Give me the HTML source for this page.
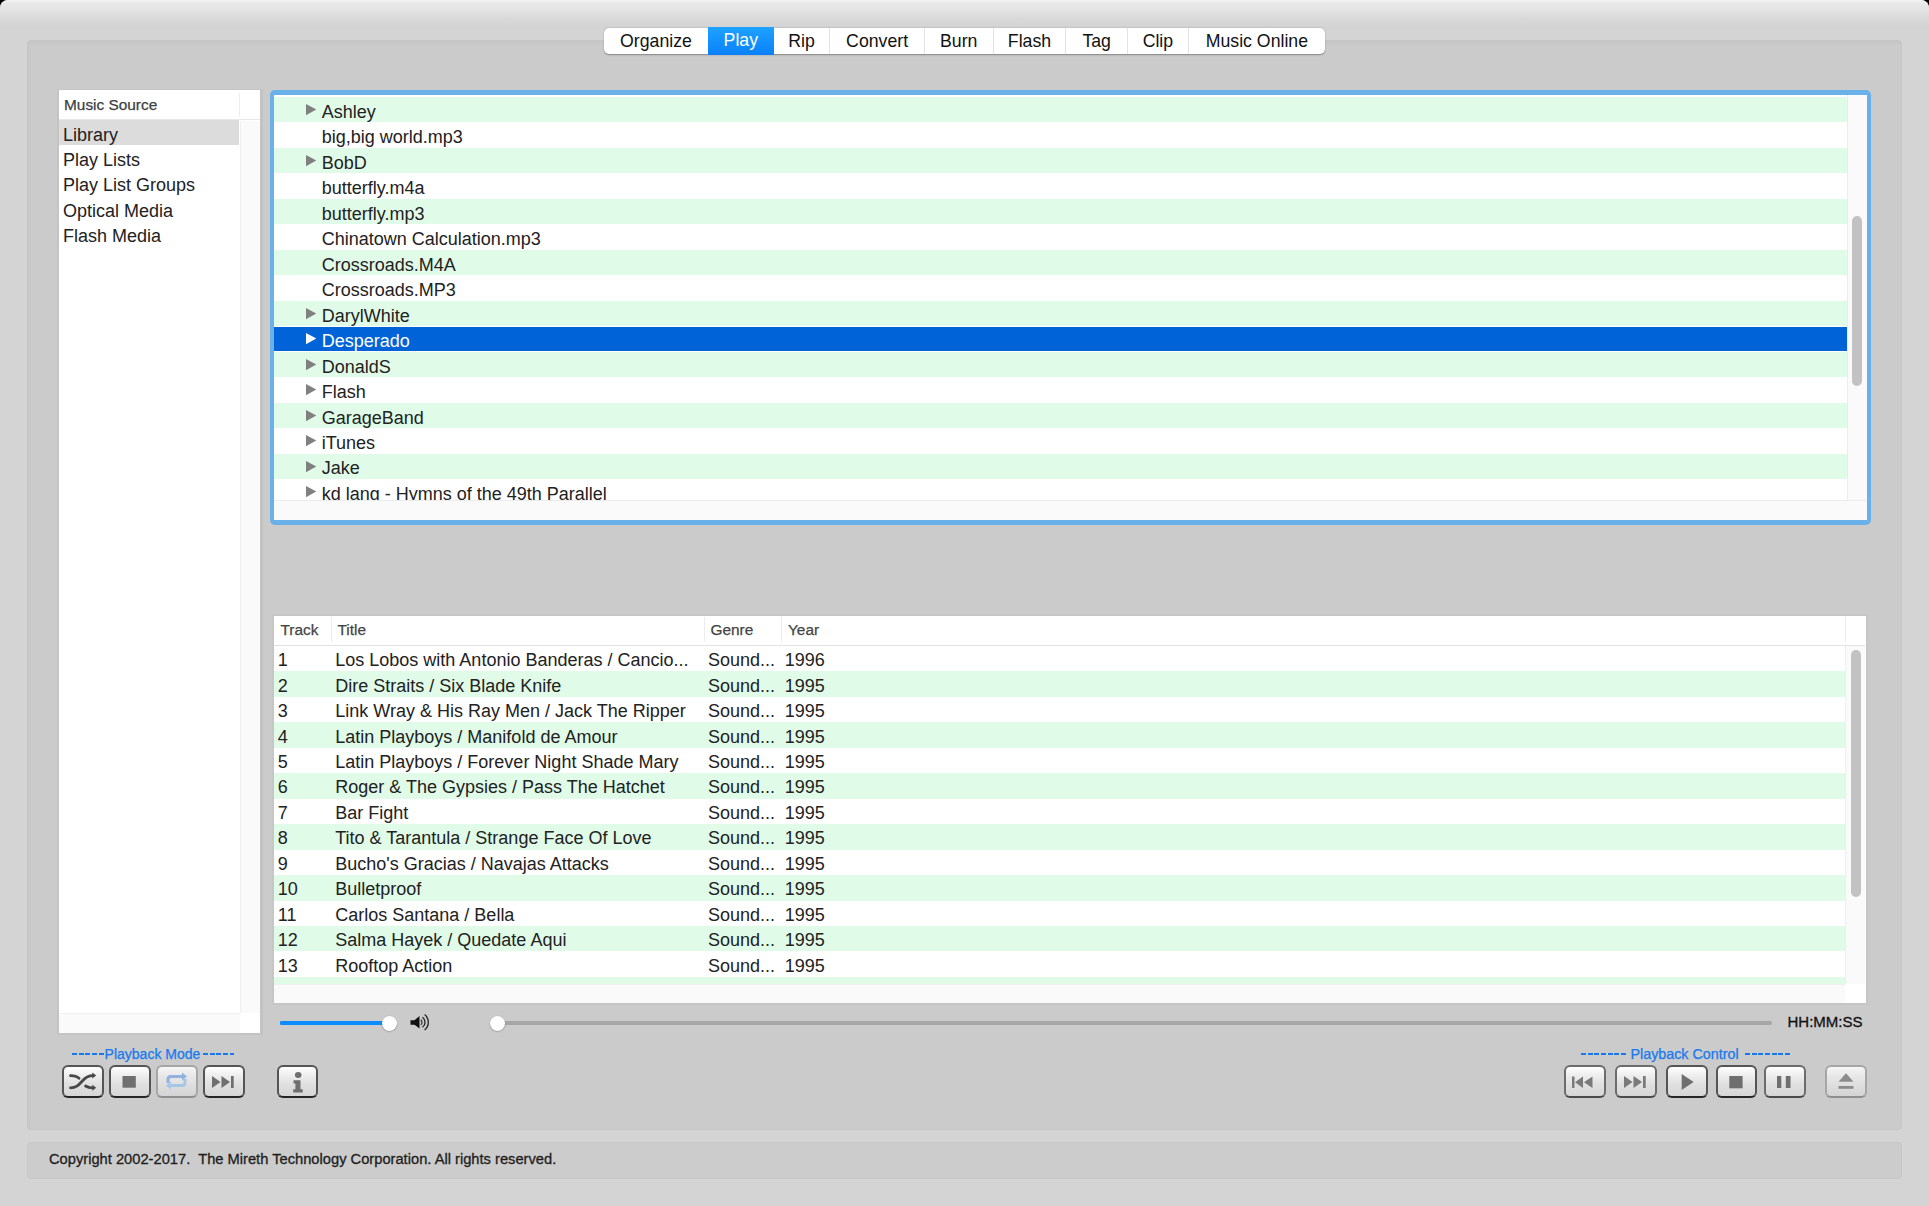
<!DOCTYPE html><html><head><meta charset="utf-8"><title>Play</title><style>
*{margin:0;padding:0;box-sizing:border-box}
html,body{width:1929px;height:1206px;overflow:hidden;background:#000}
body{font-family:"Liberation Sans",sans-serif;color:#222;position:relative}
.a{position:absolute}
#win{left:0;top:0;width:1929px;height:1206px;background:#d4d4d4;border-radius:8px 8px 0 0;overflow:hidden}
#titlegrad{left:0;top:0;width:1929px;height:28px;background:linear-gradient(#f3f3f3 0,#eaeaea 3px,#e2e2e2 11px,#d9d9d9 19px,#d4d4d4 26px)}
#inner{left:26.5px;top:40px;width:1875.5px;height:1090px;background:#cbcbcb;border-radius:4px;border:1px solid #c6c6c6;box-shadow:inset 1px 2px 3px rgba(0,0,0,.03)}
#footer{left:26.5px;top:1141.5px;width:1875.5px;height:37px;background:#cccccc;border-radius:4px;border:1px solid #c7c7c7}
#copy{left:49px;top:1150px;font-size:14.7px;line-height:18px;color:#1e1e1e;white-space:nowrap;-webkit-text-stroke:0.3px #1e1e1e}
#tabs{left:604px;top:27.8px;width:721px;height:26.2px;background:#fff;border-radius:5px;box-shadow:0 0.5px 1.5px rgba(0,0,0,.35)}
.tab{position:absolute;top:0;height:26px;line-height:26px;text-align:center;font-size:17.7px;color:#111;border-left:1px solid #e3e3e3}
.tab.first{border-left:none}
.tab.sel{top:-0.9px;height:27.8px;line-height:27.8px;background:linear-gradient(#1ea2ff,#0a80fa);color:#fff;border-left:none}
#side{left:59px;top:90px;width:201px;height:943px;background:#fff}
.sh{left:0;top:0;width:201px;height:30px;border-bottom:1px solid #e8e8e8}
.row{position:absolute;left:0;white-space:nowrap;font-size:18px;color:#222}
.txt{position:absolute;white-space:nowrap;font-size:18px;color:#222}
.hd{position:absolute;white-space:nowrap;font-size:15.4px;color:#444;-webkit-text-stroke:0.25px #444}
.tri{position:absolute;width:0;height:0;border-top:5.6px solid transparent;border-bottom:5.6px solid transparent;border-left:10.3px solid #808080}
.thumb{position:absolute;background:#c2c2c2;border-radius:5px}
.btn{position:absolute;top:1065px;width:41.5px;height:33.3px;border-radius:6px;border:2px solid #555;border-bottom:2.4px solid #262626;background:linear-gradient(#ffffff 0%,#f0f0f0 25%,#e0e0e0 60%,#d6d6d6 100%)}
.btn.dis{border-color:#a6a6a6;border-bottom-color:#8f8f8f;background:linear-gradient(#f6f6f6 0%,#e8e8e8 30%,#dcdcdc 70%,#d4d4d4 100%)}
.btn.mid{border-color:#6c6c6c;border-bottom-color:#4a4a4a}
.btn svg{position:absolute;left:0;top:0}
.lbl{position:absolute;font-size:14px;color:#1779ee;white-space:nowrap;-webkit-text-stroke:0.25px #1779ee}
</style></head><body>
<div id="win" class="a">
<div id="titlegrad" class="a"></div>
<div id="inner" class="a"></div>
<div id="footer" class="a"></div>
<div id="copy" class="a">Copyright 2002-2017.&nbsp; The Mireth Technology Corporation. All rights reserved.</div>
<div id="tabs" class="a">
<div class="tab first" style="left:0.0px;width:104.0px;">Organize</div>
<div class="tab sel" style="left:104.0px;width:65.6px;">Play</div>
<div class="tab" style="left:169.6px;width:55.8px;border-left:none;">Rip</div>
<div class="tab" style="left:225.4px;width:94.4px;">Convert</div>
<div class="tab" style="left:319.8px;width:68.9px;">Burn</div>
<div class="tab" style="left:388.7px;width:72.6px;">Flash</div>
<div class="tab" style="left:461.3px;width:61.7px;">Tag</div>
<div class="tab" style="left:523.0px;width:60.8px;">Clip</div>
<div class="tab" style="left:583.8px;width:137.2px;">Music Online</div>
</div>
<div class="a" style="left:57px;top:88.5px;width:203px;height:946px;background:#c4c4c4"></div>
<div class="a" style="left:259.7px;top:88.5px;width:3.5px;height:946px;background:#c3c3c3"></div>
<div id="side" class="a">
<div class="a sh"></div>
<div class="a" style="left:180px;top:3px;width:1px;height:24px;background:#ececec"></div>
<div class="hd" style="left:5px;top:6px;color:#3c3c3c">Music Source</div>
<div class="a" style="left:181px;top:31px;width:20px;height:892px;background:#fafafa;border-left:1px solid #f0f0f0"></div>
<div class="a" style="left:0;top:923px;width:181px;height:20px;background:#fafafa;border-top:1px solid #f0f0f0"></div>
<div class="a" style="left:0;top:30px;width:180px;height:24.5px;background:#dcdcdc"></div>
<div class="txt" style="left:4px;top:34.50px;line-height:20px">Library</div>
<div class="txt" style="left:4px;top:59.97px;line-height:20px">Play Lists</div>
<div class="txt" style="left:4px;top:85.44px;line-height:20px">Play List Groups</div>
<div class="txt" style="left:4px;top:110.91px;line-height:20px">Optical Media</div>
<div class="txt" style="left:4px;top:136.38px;line-height:20px">Flash Media</div>
</div>
<div class="a" style="left:269.7px;top:89.8px;width:1601.7px;height:435.2px;border-radius:5px;background:#6ab0e9"></div>
<div class="a" style="left:273.7px;top:94.6px;width:1593.2px;height:425.2px;background:#fff;overflow:hidden">
<div class="a" style="left:0;top:2.60px;width:1573.3px;height:25.1px;background:#e1fbe9"></div>
<svg class="a" style="left:32.8px;top:9.40px" width="11" height="12" viewBox="0 0 11 12"><path d="M0 0L10.3 5.6L0 11.2z" fill="#808080"/></svg>
<div class="txt" style="left:48px;top:7.30px;line-height:20px;color:#222">Ashley</div>
<div class="txt" style="left:48px;top:32.77px;line-height:20px;color:#222">big,big world.mp3</div>
<div class="a" style="left:0;top:53.54px;width:1573.3px;height:25.1px;background:#e1fbe9"></div>
<svg class="a" style="left:32.8px;top:60.34px" width="11" height="12" viewBox="0 0 11 12"><path d="M0 0L10.3 5.6L0 11.2z" fill="#808080"/></svg>
<div class="txt" style="left:48px;top:58.24px;line-height:20px;color:#222">BobD</div>
<div class="txt" style="left:48px;top:83.71px;line-height:20px;color:#222">butterfly.m4a</div>
<div class="a" style="left:0;top:104.48px;width:1573.3px;height:25.1px;background:#e1fbe9"></div>
<div class="txt" style="left:48px;top:109.18px;line-height:20px;color:#222">butterfly.mp3</div>
<div class="txt" style="left:48px;top:134.65px;line-height:20px;color:#222">Chinatown Calculation.mp3</div>
<div class="a" style="left:0;top:155.42px;width:1573.3px;height:25.1px;background:#e1fbe9"></div>
<div class="txt" style="left:48px;top:160.12px;line-height:20px;color:#222">Crossroads.M4A</div>
<div class="txt" style="left:48px;top:185.59px;line-height:20px;color:#222">Crossroads.MP3</div>
<div class="a" style="left:0;top:206.36px;width:1573.3px;height:25.1px;background:#e1fbe9"></div>
<svg class="a" style="left:32.8px;top:213.16px" width="11" height="12" viewBox="0 0 11 12"><path d="M0 0L10.3 5.6L0 11.2z" fill="#808080"/></svg>
<div class="txt" style="left:48px;top:211.06px;line-height:20px;color:#222">DarylWhite</div>
<div class="a" style="left:0;top:232.23px;width:1573.3px;height:24.4px;background:#0064d8"></div>
<svg class="a" style="left:32.8px;top:238.63px" width="11" height="12" viewBox="0 0 11 12"><path d="M0 0L10.3 5.6L0 11.2z" fill="#fff"/></svg>
<div class="txt" style="left:48px;top:236.53px;line-height:20px;color:#fff">Desperado</div>
<div class="a" style="left:0;top:257.30px;width:1573.3px;height:25.1px;background:#e1fbe9"></div>
<svg class="a" style="left:32.8px;top:264.10px" width="11" height="12" viewBox="0 0 11 12"><path d="M0 0L10.3 5.6L0 11.2z" fill="#808080"/></svg>
<div class="txt" style="left:48px;top:262.00px;line-height:20px;color:#222">DonaldS</div>
<svg class="a" style="left:32.8px;top:289.57px" width="11" height="12" viewBox="0 0 11 12"><path d="M0 0L10.3 5.6L0 11.2z" fill="#808080"/></svg>
<div class="txt" style="left:48px;top:287.47px;line-height:20px;color:#222">Flash</div>
<div class="a" style="left:0;top:308.24px;width:1573.3px;height:25.1px;background:#e1fbe9"></div>
<svg class="a" style="left:32.8px;top:315.04px" width="11" height="12" viewBox="0 0 11 12"><path d="M0 0L10.3 5.6L0 11.2z" fill="#808080"/></svg>
<div class="txt" style="left:48px;top:312.94px;line-height:20px;color:#222">GarageBand</div>
<svg class="a" style="left:32.8px;top:340.51px" width="11" height="12" viewBox="0 0 11 12"><path d="M0 0L10.3 5.6L0 11.2z" fill="#808080"/></svg>
<div class="txt" style="left:48px;top:338.41px;line-height:20px;color:#222">iTunes</div>
<div class="a" style="left:0;top:359.18px;width:1573.3px;height:25.1px;background:#e1fbe9"></div>
<svg class="a" style="left:32.8px;top:365.98px" width="11" height="12" viewBox="0 0 11 12"><path d="M0 0L10.3 5.6L0 11.2z" fill="#808080"/></svg>
<div class="txt" style="left:48px;top:363.88px;line-height:20px;color:#222">Jake</div>
<svg class="a" style="left:32.8px;top:391.45px" width="11" height="12" viewBox="0 0 11 12"><path d="M0 0L10.3 5.6L0 11.2z" fill="#808080"/></svg>
<div class="txt" style="left:48px;top:389.35px;line-height:20px;color:#222">kd lang - Hymns of the 49th Parallel</div>
<div class="a" style="left:1573.3px;top:0;width:20px;height:405.3px;background:#fafafa;border-left:1px solid #ececec"></div>
<div class="thumb" style="left:1578px;top:121.5px;width:10.3px;height:170px"></div>
<div class="a" style="left:0;top:405.3px;width:1593.2px;height:20px;background:#fafafa;border-top:1px solid #ececec"></div>
</div>
<div class="a" style="left:272px;top:613.5px;width:1596.2px;height:391.5px;background:#c6c6c6;border-radius:1.5px"></div>
<div class="a" style="left:274.4px;top:616px;width:1591.6px;height:387px;background:#fff;overflow:hidden">
<div class="a" style="left:0;top:29px;width:1591px;height:1px;background:#e2e2e2"></div>
<div class="a" style="left:56.6px;top:1px;width:1px;height:25px;background:#ececec"></div>
<div class="a" style="left:429.6px;top:1px;width:1px;height:25px;background:#ececec"></div>
<div class="a" style="left:506.6px;top:1px;width:1px;height:25px;background:#ececec"></div>
<div class="a" style="left:1570.6px;top:1px;width:1px;height:25px;background:#ececec"></div>
<div class="hd" style="left:6.1px;top:4.7px">Track</div>
<div class="hd" style="left:63.1px;top:4.7px">Title</div>
<div class="hd" style="left:436.1px;top:4.7px">Genre</div>
<div class="hd" style="left:513.6px;top:4.7px">Year</div>
<div class="txt" style="left:3.4px;top:34.10px;line-height:20px">1</div>
<div class="txt" style="left:60.9px;top:34.10px;line-height:20px">Los Lobos with Antonio Banderas / Cancio...</div>
<div class="txt" style="left:433.6px;top:34.10px;line-height:20px">Sound...</div>
<div class="txt" style="left:510.4px;top:34.10px;line-height:20px">1996</div>
<div class="a" style="left:0;top:55.37px;width:1571px;height:25.4px;background:#e1fbe9"></div>
<div class="txt" style="left:3.4px;top:59.57px;line-height:20px">2</div>
<div class="txt" style="left:60.9px;top:59.57px;line-height:20px">Dire Straits / Six Blade Knife</div>
<div class="txt" style="left:433.6px;top:59.57px;line-height:20px">Sound...</div>
<div class="txt" style="left:510.4px;top:59.57px;line-height:20px">1995</div>
<div class="txt" style="left:3.4px;top:85.04px;line-height:20px">3</div>
<div class="txt" style="left:60.9px;top:85.04px;line-height:20px">Link Wray &amp; His Ray Men / Jack The Ripper</div>
<div class="txt" style="left:433.6px;top:85.04px;line-height:20px">Sound...</div>
<div class="txt" style="left:510.4px;top:85.04px;line-height:20px">1995</div>
<div class="a" style="left:0;top:106.31px;width:1571px;height:25.4px;background:#e1fbe9"></div>
<div class="txt" style="left:3.4px;top:110.51px;line-height:20px">4</div>
<div class="txt" style="left:60.9px;top:110.51px;line-height:20px">Latin Playboys / Manifold de Amour</div>
<div class="txt" style="left:433.6px;top:110.51px;line-height:20px">Sound...</div>
<div class="txt" style="left:510.4px;top:110.51px;line-height:20px">1995</div>
<div class="txt" style="left:3.4px;top:135.98px;line-height:20px">5</div>
<div class="txt" style="left:60.9px;top:135.98px;line-height:20px">Latin Playboys / Forever Night Shade Mary</div>
<div class="txt" style="left:433.6px;top:135.98px;line-height:20px">Sound...</div>
<div class="txt" style="left:510.4px;top:135.98px;line-height:20px">1995</div>
<div class="a" style="left:0;top:157.25px;width:1571px;height:25.4px;background:#e1fbe9"></div>
<div class="txt" style="left:3.4px;top:161.45px;line-height:20px">6</div>
<div class="txt" style="left:60.9px;top:161.45px;line-height:20px">Roger &amp; The Gypsies / Pass The Hatchet</div>
<div class="txt" style="left:433.6px;top:161.45px;line-height:20px">Sound...</div>
<div class="txt" style="left:510.4px;top:161.45px;line-height:20px">1995</div>
<div class="txt" style="left:3.4px;top:186.92px;line-height:20px">7</div>
<div class="txt" style="left:60.9px;top:186.92px;line-height:20px">Bar Fight</div>
<div class="txt" style="left:433.6px;top:186.92px;line-height:20px">Sound...</div>
<div class="txt" style="left:510.4px;top:186.92px;line-height:20px">1995</div>
<div class="a" style="left:0;top:208.19px;width:1571px;height:25.4px;background:#e1fbe9"></div>
<div class="txt" style="left:3.4px;top:212.39px;line-height:20px">8</div>
<div class="txt" style="left:60.9px;top:212.39px;line-height:20px">Tito &amp; Tarantula / Strange Face Of Love</div>
<div class="txt" style="left:433.6px;top:212.39px;line-height:20px">Sound...</div>
<div class="txt" style="left:510.4px;top:212.39px;line-height:20px">1995</div>
<div class="txt" style="left:3.4px;top:237.86px;line-height:20px">9</div>
<div class="txt" style="left:60.9px;top:237.86px;line-height:20px">Bucho's Gracias / Navajas Attacks</div>
<div class="txt" style="left:433.6px;top:237.86px;line-height:20px">Sound...</div>
<div class="txt" style="left:510.4px;top:237.86px;line-height:20px">1995</div>
<div class="a" style="left:0;top:259.13px;width:1571px;height:25.4px;background:#e1fbe9"></div>
<div class="txt" style="left:3.4px;top:263.33px;line-height:20px">10</div>
<div class="txt" style="left:60.9px;top:263.33px;line-height:20px">Bulletproof</div>
<div class="txt" style="left:433.6px;top:263.33px;line-height:20px">Sound...</div>
<div class="txt" style="left:510.4px;top:263.33px;line-height:20px">1995</div>
<div class="txt" style="left:3.4px;top:288.80px;line-height:20px">11</div>
<div class="txt" style="left:60.9px;top:288.80px;line-height:20px">Carlos Santana / Bella</div>
<div class="txt" style="left:433.6px;top:288.80px;line-height:20px">Sound...</div>
<div class="txt" style="left:510.4px;top:288.80px;line-height:20px">1995</div>
<div class="a" style="left:0;top:310.07px;width:1571px;height:25.4px;background:#e1fbe9"></div>
<div class="txt" style="left:3.4px;top:314.27px;line-height:20px">12</div>
<div class="txt" style="left:60.9px;top:314.27px;line-height:20px">Salma Hayek / Quedate Aqui</div>
<div class="txt" style="left:433.6px;top:314.27px;line-height:20px">Sound...</div>
<div class="txt" style="left:510.4px;top:314.27px;line-height:20px">1995</div>
<div class="txt" style="left:3.4px;top:339.74px;line-height:20px">13</div>
<div class="txt" style="left:60.9px;top:339.74px;line-height:20px">Rooftop Action</div>
<div class="txt" style="left:433.6px;top:339.74px;line-height:20px">Sound...</div>
<div class="txt" style="left:510.4px;top:339.74px;line-height:20px">1995</div>
<div class="a" style="left:0;top:361.01px;width:1571px;height:25.4px;background:#e1fbe9"></div>
<div class="a" style="left:1571px;top:30px;width:20px;height:338px;background:#fafafa;border-left:1px solid #efefef"></div>
<div class="thumb" style="left:1577px;top:34px;width:10px;height:247px"></div>
<div class="a" style="left:0;top:368px;width:1571px;height:19px;background:#fafafa;border-top:1px solid #f0f0f0"></div>
</div>
<div class="a" style="left:280px;top:1020.7px;width:110px;height:4.4px;border-radius:1px;background:#0b8dff"></div>
<div class="a" style="left:381.5px;top:1015.5px;width:15px;height:15px;border-radius:50%;background:#fff;box-shadow:0 0.5px 1.5px rgba(0,0,0,.35)"></div>
<svg class="a" style="left:405px;top:1010px" width="30" height="26" viewBox="405 1010 30 26"><path d="M410.5 1020.3h4l5-4.4v12.7l-5-3.8h-4z" fill="#111"/><path d="M420.8 1019.8a3.2 3.2 0 0 1 0 5" stroke="#333" stroke-width="1.2" fill="none"/><path d="M422.5 1017.3a6.2 6.2 0 0 1 0 10" stroke="#222" stroke-width="1.3" fill="none"/><path d="M424.6 1014.6a9.8 9.8 0 0 1 0 15.4" stroke="#222" stroke-width="1.3" fill="none"/></svg>
<div class="a" style="left:497px;top:1021px;width:1275px;height:4px;border-radius:2px;background:#a6a6a6"></div>
<div class="a" style="left:489.5px;top:1015.5px;width:15px;height:15px;border-radius:50%;background:#fff;box-shadow:0 0.5px 1.5px rgba(0,0,0,.35)"></div>
<div class="a" style="left:1787.5px;top:1013px;font-size:15px;line-height:18px;color:#111;white-space:nowrap;-webkit-text-stroke:0.3px #111">HH:MM:SS</div>
<div class="a" style="left:71.9px;top:1053.4px;width:31.8px;height:1.9px;background:repeating-linear-gradient(90deg,#1779ee 0,#1779ee 5px,transparent 5px,transparent 6.7px)"></div>
<div class="lbl" style="left:104.6px;top:1046px;line-height:16px">Playback Mode</div>
<div class="a" style="left:202.7px;top:1053.4px;width:31.8px;height:1.9px;background:repeating-linear-gradient(90deg,#1779ee 0,#1779ee 5px,transparent 5px,transparent 6.7px)"></div>
<div class="a" style="left:1581px;top:1053.4px;width:45.2px;height:1.9px;background:repeating-linear-gradient(90deg,#1779ee 0,#1779ee 5px,transparent 5px,transparent 6.7px)"></div>
<div class="lbl" style="left:1630.5px;top:1046px;line-height:16px;font-size:14.3px">Playback Control</div>
<div class="a" style="left:1744.5px;top:1053.4px;width:45.2px;height:1.9px;background:repeating-linear-gradient(90deg,#1779ee 0,#1779ee 5px,transparent 5px,transparent 6.7px)"></div>
<div class="btn" style="left:62px"><svg width="37" height="29" viewBox="0 0 37 29"><path d="M6.5 8.7C10 8.7 12.5 9 15 11.3" stroke="#484848" stroke-width="2.8" fill="none" stroke-linecap="round"/><path d="M6.5 20.8C13 20.8 15 17.5 19.3 13C22 10 24 8.6 28.8 8.6" stroke="#484848" stroke-width="2.8" fill="none" stroke-linecap="round"/><path d="M21.6 19C23.5 20.3 25 20.8 28.8 20.8" stroke="#484848" stroke-width="2.8" fill="none" stroke-linecap="round"/><path d="M28.3 5.6L32.2 8.6L28.3 11.6z" fill="#484848"/><path d="M28.3 17.8L32.2 20.8L28.3 23.8z" fill="#484848"/></svg></div>
<div class="btn" style="left:109px"><svg width="37" height="29" viewBox="0 0 37 29"><rect x="11.5" y="9" width="13.3" height="11.7" fill="#6f6f6f"/></svg></div>
<div class="btn dis" style="left:156px"><svg width="37" height="29" viewBox="0 0 37 29"><path d="M10 16v-3.5q0-3 3-3h12" stroke="#90b2de" stroke-width="3" fill="none"/><path d="M24 5.5l5 4-5 4z" fill="#90b2de"/><path d="M27 12v3.5q0 3-3 3h-12" stroke="#a6c6e6" stroke-width="3" fill="none"/><path d="M13 14.5l-5 4 5 4z" fill="#a6c6e6"/></svg></div>
<div class="btn" style="left:203px"><svg width="37" height="29" viewBox="0 0 37 29"><path d="M7 9l8.5 6-8.5 6z M16.5 9l8.5 6-8.5 6z" fill="#6f6f6f"/><rect x="26" y="9" width="2.7" height="12" fill="#6f6f6f"/></svg></div>
<div class="btn" style="left:276.5px"><svg width="37" height="29" viewBox="0 0 37 29"><ellipse cx="19.2" cy="8" rx="3.3" ry="3" fill="#6f6f6f"/><path d="M14.5 13.3h7v9h2.2v3.2h-9.5v-3.2h2.2v-5.8h-1.9z" fill="#6f6f6f"/></svg></div>
<div class="btn mid" style="left:1564px"><svg width="37" height="29" viewBox="0 0 37 29"><rect x="6" y="9.5" width="2.5" height="11.5" fill="#7a7a7a"/><path d="M17 9.5l-8 5.8 8 5.8z M26.5 9.5l-8.5 5.8 8.5 5.8z" fill="#7a7a7a"/></svg></div>
<div class="btn mid" style="left:1615px"><svg width="37" height="29" viewBox="0 0 37 29"><path d="M7 9l8.5 6-8.5 6z M16.5 9l8.5 6-8.5 6z" fill="#7a7a7a"/><rect x="26" y="9" width="2.7" height="12" fill="#7a7a7a"/></svg></div>
<div class="btn" style="left:1666px"><svg width="37" height="29" viewBox="0 0 37 29"><path d="M13.7 7l12 8-12 8z" fill="#6f6f6f"/></svg></div>
<div class="btn" style="left:1715.5px"><svg width="37" height="29" viewBox="0 0 37 29"><rect x="11.3" y="9" width="13.3" height="12.3" fill="#6f6f6f"/></svg></div>
<div class="btn mid" style="left:1764px"><svg width="37" height="29" viewBox="0 0 37 29"><rect x="11" y="9" width="4.3" height="12" fill="#6f6f6f"/><rect x="19.8" y="9" width="4.7" height="12" fill="#6f6f6f"/></svg></div>
<div class="btn dis" style="left:1825px"><svg width="37" height="29" viewBox="0 0 37 29"><path d="M11.5 14.8l7.5-8.5 7.5 8.5z" fill="#8c8c8c"/><rect x="11.5" y="19" width="15" height="2.8" fill="#8c8c8c"/></svg></div>
</div></body></html>
